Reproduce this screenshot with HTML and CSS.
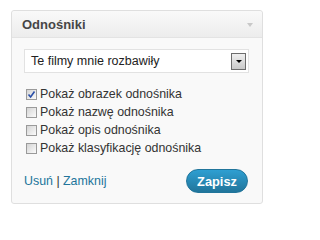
FILE: index.html
```html
<!DOCTYPE html>
<html lang="pl">
<head>
<meta charset="utf-8">
<title>Odnośniki</title>
<link rel="stylesheet" href="styles.css">
</head>
<body>
<div class="widget">
  <div class="widget-top">
    <span class="widget-title">Odnośniki</span>
    <span class="widget-toggle"></span>
  </div>
  <div class="widget-inside">
    <div class="select">
      <span class="select-value">Te filmy mnie rozbawiły</span>
      <span class="select-button"><span class="select-arrow"></span></span>
    </div>
    <ul class="options">
      <li class="option"><span class="box"><svg viewBox="0 0 9 9" width="9" height="9"><path d="M1.5 4.5 L3.6 7 L7.5 1.5" fill="none" stroke="#2a4fa8" stroke-width="1.6"/></svg></span>Pokaż obrazek odnośnika</li>
      <li class="option"><span class="box"></span>Pokaż nazwę odnośnika</li>
      <li class="option"><span class="box"></span>Pokaż opis odnośnika</li>
      <li class="option"><span class="box"></span>Pokaż klasyfikację odnośnika</li>
    </ul>
    <div class="controls">
      <div class="links"><a href="#" class="link">Usuń</a> | <a href="#" class="link">Zamknij</a></div>
      <button class="save">Zapisz</button>
    </div>
  </div>
</div>
</body>
</html>
```
FILE: styles.css
```css
html, body {
  margin: 0;
  padding: 0;
  background: #ffffff;
}
body {
  font-family: "Liberation Sans", Arial, sans-serif;
  font-size: 12.4px;
  color: #333333;
  padding: 10px 0 0 11px;
}
.widget {
  width: 250px;
  height: 192px;
  border: 1px solid #dfdfdf;
  border-radius: 3px;
  background: #f9f9f9;
  display: flex;
  flex-direction: column;
}
.widget-top {
  height: 26px;
  border-bottom: 1px solid #e3e3e3;
  background: linear-gradient(#f9f9f9, #ececec);
  border-radius: 3px 3px 0 0;
  display: flex;
  align-items: center;
  justify-content: space-between;
  padding: 0 9px 0 10px;
}
.widget-title {
  font-weight: bold;
  color: #464646;
  font-size: 13px;
}
.widget-toggle {
  width: 0;
  height: 0;
  border-left: 3px solid transparent;
  border-right: 3px solid transparent;
  border-top: 4px solid #c8c8c8;
  margin-top: 2px;
}
.widget-inside {
  flex: 1;
  padding: 11px 13px 10px 12px;
  display: flex;
  flex-direction: column;
}
.select {
  height: 22px;
  border: 1px solid #e2e2e2;
  background: #ffffff;
  display: flex;
  align-items: center;
  justify-content: space-between;
  padding: 0 2px 0 6px;
  font-size: 12.5px;
  color: #222;
}
.select-button {
  width: 13px;
  height: 15px;
  border: 1px solid #6d6d6d;
  background: linear-gradient(#f0f0f0, #c9c9c9);
  display: flex;
  align-items: center;
  justify-content: center;
}
.select-arrow {
  width: 0;
  height: 0;
  border-left: 3px solid transparent;
  border-right: 3px solid transparent;
  border-top: 3px solid #000;
}
.options {
  list-style: none;
  margin: 12px 0 0 0;
  padding: 0 0 0 2px;
}
.option {
  height: 18px;
  display: flex;
  align-items: center;
  color: #333;
}
.box {
  width: 9px;
  height: 9px;
  border: 1px solid #9a9a9a;
  background: linear-gradient(135deg, #d4d4d4, #fbfbfb);
  margin-right: 3px;
  display: flex;
}
.controls {
  margin-top: auto;
  display: flex;
  align-items: center;
  justify-content: space-between;
}
.link {
  color: #21759b;
  text-decoration: none;
}
.save {
  width: 62px;
  height: 24px;
  border: 1px solid #21759b;
  border-radius: 12px;
  background: linear-gradient(#2e9fd2, #21759b);
  color: #ffffff;
  font-family: "Liberation Sans", Arial, sans-serif;
  font-weight: bold;
  font-size: 12.8px;
  padding: 0;
  margin-right: 1px;
}
```
